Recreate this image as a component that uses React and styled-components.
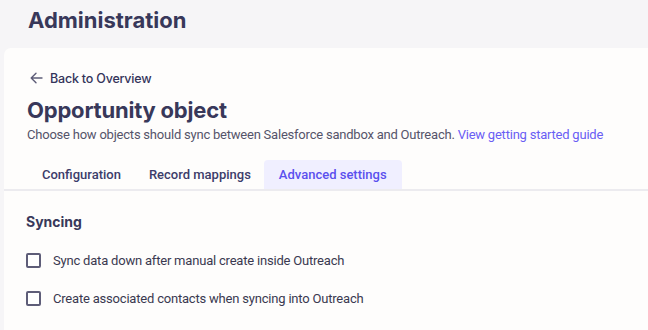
import React, { useState } from "react";
import styled, { createGlobalStyle } from "styled-components";

const GlobalStyle = createGlobalStyle`
  html, body {
    margin: 0;
    padding: 0;
    background: #f6f5f7;
  }
  body {
    font-family: Roboto, "Liberation Sans", sans-serif;
    color: #3a3950;
  }
`;

const Page = styled.div`
  width: 648px;
  height: 330px;
  overflow: hidden;
  display: flex;
  flex-direction: column;
`;

const PageTitle = styled.h1`
  margin: 0;
  padding: 7px 28px 0;
  height: 48px;
  box-sizing: border-box;
  font-family: Inter, "Open Sans", sans-serif;
  font-weight: 700;
  font-size: 22px;
  line-height: 26px;
  color: #38385a;
`;

const Card = styled.div`
  flex: 1;
  margin-left: 4px;
  background: #fefdfc;
  border-top-left-radius: 7px;
  padding-top: 22px;
`;

const Header = styled.div`
  padding: 0 23px;
`;

const BackLink = styled.a`
  display: flex;
  align-items: center;
  gap: 7px;
  padding-left: 3px;
  font-family: Inter, sans-serif;
  font-size: 12.5px;
  font-weight: 500;
  color: #34345a;
  text-decoration: none;
  height: 16px;
  letter-spacing: -0.2px;
`;

const Title = styled.h2`
  margin: 11px 0 0;
  font-family: Inter, "Open Sans", sans-serif;
  font-weight: 700;
  font-size: 22px;
  line-height: 26px;
  color: #38385a;
  letter-spacing: -0.2px;
`;

const Subtitle = styled.p`
  margin: 3px 0 0;
  font-size: 13px;
  line-height: 17px;
  color: #55546a;
  letter-spacing: -0.22px;
`;

const GuideLink = styled.a`
  color: #6a5ef4;
  text-decoration: none;
`;

const Tabs = styled.div`
  display: flex;
  margin-top: 17px;
  padding-left: 23px;
  border-bottom: 2px solid #ecebef;
`;

const Tab = styled.button`
  border: none;
  background: ${(p) => (p.$active ? "#f0efff" : "transparent")};
  color: ${(p) => (p.$active ? "#5b50ee" : "#3c3c6a")};
  font-family: Roboto, sans-serif;
  font-size: 13px;
  font-weight: 500;
  height: 29px;
  padding: 0 15px;
  margin-right: -2px;
  border-radius: 4px 4px 0 0;
  cursor: pointer;
`;

const Section = styled.div`
  padding: 21px 22px 0;
`;

const SectionTitle = styled.h3`
  margin: 0 0 9px;
  font-family: Inter, sans-serif;
  font-weight: 700;
  font-size: 14px;
  line-height: 20px;
  color: #38385a;
`;

const Option = styled.label`
  display: flex;
  align-items: center;
  gap: 12px;
  height: 38px;
  font-size: 13px;
  letter-spacing: -0.2px;
  color: #3a3950;
  cursor: pointer;
`;

const Box = styled.span`
  width: 15px;
  height: 15px;
  box-sizing: border-box;
  border: 2px solid #5e5d78;
  border-radius: 2px;
  background: ${(p) => (p.$checked ? "#5b50ee" : "#fff")};
`;

const tabs = ["Configuration", "Record mappings", "Advanced settings"];
const options = [
  "Sync data down after manual create inside Outreach",
  "Create associated contacts when syncing into Outreach",
];

export default function App() {
  const [active, setActive] = useState(2);
  const [checked, setChecked] = useState([false, false]);

  return (
    <Page>
      <GlobalStyle />
      <PageTitle>Administration</PageTitle>
      <Card>
        <Header>
          <BackLink href="#">
            <svg width="13" height="12" viewBox="0 0 13 12" fill="none">
              <path
                d="M12 6H1.5M6 1.2L1.2 6L6 10.8"
                stroke="#5e5d78"
                strokeWidth="1.4"
                strokeLinecap="round"
                strokeLinejoin="round"
              />
            </svg>
            Back to Overview
          </BackLink>
          <Title>Opportunity object</Title>
          <Subtitle>
            Choose how objects should sync between Salesforce sandbox and
            Outreach. <GuideLink href="#">View getting started guide</GuideLink>
          </Subtitle>
        </Header>
        <Tabs>
          {tabs.map((t, i) => (
            <Tab key={t} $active={i === active} onClick={() => setActive(i)}>
              {t}
            </Tab>
          ))}
        </Tabs>
        <Section>
          <SectionTitle>Syncing</SectionTitle>
          {options.map((o, i) => (
            <Option
              key={o}
              onClick={() =>
                setChecked((c) => c.map((v, j) => (j === i ? !v : v)))
              }
            >
              <Box $checked={checked[i]} />
              {o}
            </Option>
          ))}
        </Section>
      </Card>
    </Page>
  );
}
